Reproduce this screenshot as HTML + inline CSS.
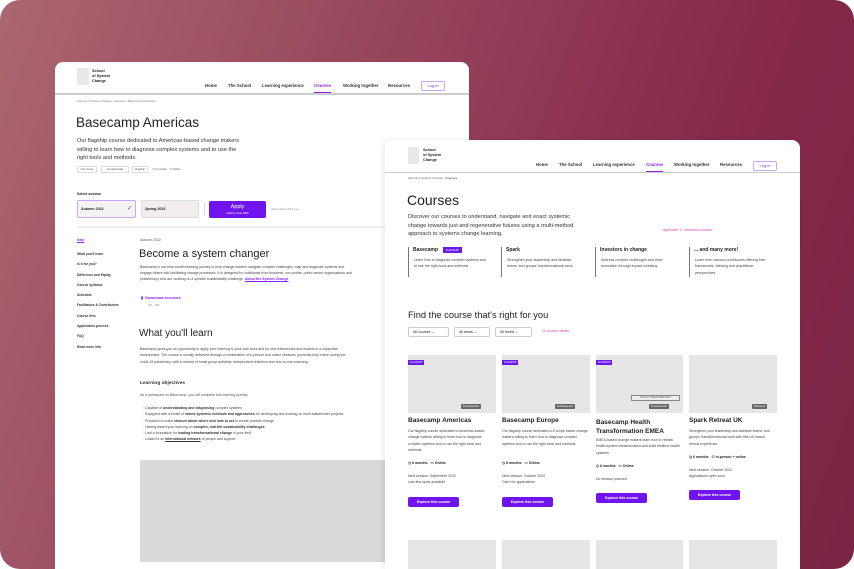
<!DOCTYPE html>
<html><head><meta charset="utf-8">
<style>
*{margin:0;padding:0;box-sizing:border-box}
html,body{width:854px;height:569px;overflow:hidden;background:#fff}
body{font-family:"Liberation Sans",sans-serif;color:#222;position:relative}
.bg{position:absolute;left:0;top:0;width:854px;height:569px;border-radius:20px;background:linear-gradient(110deg,#ab6670 0%,#933f58 45%,#85284a 75%,#7a2545 100%);overflow:hidden}
.win{position:absolute;background:#fff;border-radius:8px 8px 0 0;overflow:hidden}
.a{position:absolute;white-space:nowrap;line-height:1}
.logo{position:absolute;background:#e8e8e8}
.nav{font-size:4.3px;font-weight:bold;color:#333}
.p{color:#8d22f0}
.btn{position:absolute;background:#6f14ef;border-radius:2px;color:#fff;font-size:4px;font-weight:bold;text-align:center}
.gry{position:absolute;background:#e6e6e6}
.tag{position:absolute;background:#6a1aef;color:#fff;font-size:2.5px;padding:1px 2px}
.dtag{position:absolute;background:#666;color:#fff;font-size:2.5px;padding:1px 2px;border-radius:1px}
.t{font-size:4px;color:#444;line-height:6.3px;white-space:normal}
.t b{color:#333}
</style></head><body>
<div class="bg"></div>

<!-- LEFT WINDOW -->
<div class="win" style="left:55px;top:62px;width:414px;height:507px">
 <div class="logo" style="left:22px;top:6px;width:12px;height:17px"></div>
 <div class="a" style="left:37px;top:7px;font-size:3.8px;font-weight:bold;line-height:5px">School<br>of System<br>Change</div>
 <div class="a nav" style="left:150px;top:22px">Home</div>
 <div class="a nav" style="left:173px;top:22px">The School</div>
 <div class="a nav" style="left:207px;top:22px">Learning experience</div>
 <div class="a nav p" style="left:259px;top:22px">Courses</div>
 <div style="position:absolute;left:259px;top:30px;width:17px;height:1px;background:#8d22f0"></div>
 <div class="a nav" style="left:288px;top:22px">Working together</div>
 <div class="a nav" style="left:333px;top:22px">Resources</div>
 <div style="position:absolute;left:366px;top:19px;width:24px;height:10px;border:1px solid #c9a6f7;border-radius:2px;font-size:4px;color:#8d22f0;text-align:center;line-height:8px">Log in</div>
 <div style="position:absolute;left:0;top:31px;width:414px;height:1.5px;background:#ccc"></div>
 <div class="a" style="left:22px;top:38px;font-size:3px;color:#777">School of System Change › Courses › Basecamp Americas</div>
 <div class="a" style="left:21px;top:54px;font-size:13.5px;color:#222">Basecamp Americas</div>
 <div class="a" style="left:22px;top:75px;font-size:5.6px;line-height:8.5px;color:#333">Our flagship course dedicated to Americas-based change makers<br>willing to learn how to diagnose complex systems and to use the<br>right tools and methods.</div>
 <div style="position:absolute;left:22px;top:104px;width:20px;height:7px;border:1px solid #ddd;border-radius:1px;font-size:2.6px;line-height:5px;text-align:center;color:#555">Full course</div>
 <div style="position:absolute;left:46px;top:104px;width:28px;height:7px;border:1px solid #ddd;border-radius:1px;font-size:2.6px;line-height:5px;text-align:center;color:#555">Fundamentals</div>
 <div style="position:absolute;left:77px;top:104px;width:16px;height:7px;border:1px solid #ddd;border-radius:1px;font-size:2.6px;line-height:5px;text-align:center;color:#555">Flagship</div>
 <div class="a" style="left:97px;top:106px;font-size:2.8px;color:#555">◷ 6 months &nbsp; ▭ Online</div>
 <div class="a" style="left:22px;top:131px;font-size:3.5px;font-weight:bold">Select session</div>
 <div style="position:absolute;left:22px;top:138px;width:59px;height:18px;border:1.5px solid #c9a6f7;border-radius:2px;background:#f4f2f2"></div>
 <div class="a" style="left:26px;top:146px;font-size:3.6px;font-weight:bold">Autumn 2022</div>
 <div class="a p" style="left:72px;top:144px;font-size:6px">✓</div>
 <div style="position:absolute;left:86px;top:138px;width:58px;height:18px;border:1px solid #ddd;border-radius:2px;background:#f2eeee"></div>
 <div class="a" style="left:90px;top:146px;font-size:3.6px;font-weight:bold">Spring 2023</div>
 <div style="position:absolute;left:149px;top:140px;width:1px;height:14px;background:#ddd"></div>
 <div class="btn" style="left:154px;top:139px;width:57px;height:17px"><div style="font-size:5.5px;font-weight:normal;margin-top:2.5px">Apply</div><div style="font-size:3px;font-weight:normal;margin-top:1px">before June 30th</div></div>
 <div class="a" style="left:216px;top:147px;font-size:2.5px;color:#888">Unsure how to bring it up</div>
 <div style="position:absolute;left:22px;top:164px;width:392px;height:1.5px;background:#eee"></div>
 <div class="a p" style="left:22px;top:177px;font-size:3.3px;text-decoration:underline;font-weight:bold">Intro</div>
 <div class="a" style="left:22px;top:187px;font-size:3.3px;font-weight:bold;line-height:10.3px;color:#333">What you'll learn<br>Is it for you?<br>Difference and Equity<br>Course syllabus<br>Schedule<br>Facilitators &amp; Contributors<br>Course fees<br>Application process<br>FAQ<br>Read more info</div>
 <div class="a" style="left:85px;top:177px;font-size:3.5px;color:#555">Autumn 2022</div>
 <div class="a" style="left:84px;top:187px;font-size:11px;color:#222">Become a system changer</div>
 <div class="a t" style="left:85px;top:202px;width:215px;font-size:3.5px;line-height:6px">Basecamp is our nine-month learning journey to help change leaders navigate complex challenges, map and diagnose systems and engage others with facilitating change processes. It is designed for individuals from business, non-profits, public sector organisations and philanthropy who are working on a specific sustainability challenge. <span class="p" style="text-decoration:underline;font-weight:bold">About the System Change</span></div>
 <div class="a p" style="left:86px;top:235px;font-size:3.8px;font-weight:bold">▮ &nbsp;Download brochure</div>
 <div class="a" style="left:93px;top:242px;font-size:2.8px;color:#888">pdf · 2Mb</div>
 <div class="a" style="left:84px;top:267px;font-size:10px;color:#222">What you'll learn</div>
 <div class="a t" style="left:85px;top:284px;width:215px;font-size:3.5px;line-height:6.3px">Basecamp gives you an opportunity to apply your learning to your own work and try new frameworks and models in a supportive environment. The course is usually delivered through a combination of in person and online sessions (currently fully online during the covid-19 pandemic), with a mixture of small group activities, independent reflection and one-to-one coaching.</div>
 <div class="a" style="left:85px;top:320px;font-size:4.8px;font-weight:bold;color:#333">Learning objectives</div>
 <div class="a" style="left:85px;top:332px;font-size:3.5px;color:#555">As a participant on Basecamp, you will complete this learning journey:</div>
 <div class="a t" style="left:88px;top:343px;width:210px;font-size:3.5px;line-height:6.3px">· Capable of <b>understanding and diagnosing</b> complex systems<br>· Equipped with a toolkit of <b>varied systemic methods and approaches</b> for developing and working on multi-stakeholder projects<br>· Prepared to make <b>choices about where and how to act</b> to create positive change<br>· Having tested your learning on <b>complex, real-life sustainability challenges</b><br>· Laid a foundation for <b>leading transformational change</b> in your field<br>· Linked to an <b style="text-decoration:underline">international network</b> of people and support</div>
 <div style="position:absolute;left:85px;top:398px;width:329px;height:102px;background:#d9d9d9"></div>
</div>

<!-- RIGHT WINDOW -->
<div class="win" style="left:385px;top:140px;width:415px;height:429px;box-shadow:-2px 0 6px rgba(0,0,0,.08)">
 <div class="logo" style="left:23px;top:7px;width:11px;height:17px"></div>
 <div class="a" style="left:38px;top:8px;font-size:3.8px;font-weight:bold;line-height:5px">School<br>of System<br>Change</div>
 <div class="a nav" style="left:151px;top:23px">Home</div>
 <div class="a nav" style="left:174px;top:23px">The School</div>
 <div class="a nav" style="left:208px;top:23px">Learning experience</div>
 <div class="a nav p" style="left:261px;top:23px">Courses</div>
 <div style="position:absolute;left:261px;top:31px;width:17px;height:1px;background:#8d22f0"></div>
 <div class="a nav" style="left:289px;top:23px">Working together</div>
 <div class="a nav" style="left:335px;top:23px">Resources</div>
 <div style="position:absolute;left:368px;top:21px;width:24px;height:10px;border:1px solid #c9a6f7;border-radius:2px;font-size:4px;color:#8d22f0;text-align:center;line-height:8px">Log in</div>
 <div style="position:absolute;left:0;top:31.5px;width:415px;height:1.5px;background:#ccc"></div>
 <div class="a" style="left:23px;top:37px;font-size:3px;color:#666">School of System Change › <b>Courses</b></div>
 <div class="a" style="left:22px;top:53px;font-size:14px;color:#222">Courses</div>
 <div class="a" style="left:23px;top:73px;font-size:5.6px;line-height:8.5px;color:#333">Discover our courses to understand, navigate and enact systemic<br>change towards just and regenerative futures using a multi-method<br>approach to systems change learning.</div>
 <div class="a" style="left:278px;top:89px;font-size:3.6px;color:#e03ea8">Approach 1: "selected courses"</div>

 <div style="position:absolute;left:23px;top:107px;width:1px;height:30px;background:#777"></div>
 <div class="a" style="left:28px;top:108px;font-size:5px;font-weight:bold">Basecamp</div>
 <div class="tag" style="left:58px;top:107px;font-size:2.6px;padding:1.5px 3px">FLAGSHIP</div>
 <div class="a t" style="left:29px;top:117px;width:75px;font-size:3.6px">Learn how to diagnose complex systems and to use the right tools and methods.</div>
 <div style="position:absolute;left:116px;top:107px;width:1px;height:30px;background:#777"></div>
 <div class="a" style="left:121px;top:108px;font-size:5px;font-weight:bold">Spark</div>
 <div class="a t" style="left:122px;top:117px;width:75px;font-size:3.6px">Strengthen your leadership and facilitate teams' and groups' transformational work.</div>
 <div style="position:absolute;left:210px;top:107px;width:1px;height:30px;background:#777"></div>
 <div class="a" style="left:215px;top:108px;font-size:5px;font-weight:bold">Investors in change</div>
 <div class="a t" style="left:216px;top:117px;width:75px;font-size:3.6px">Address complex challenges and drive innovation through impact investing.</div>
 <div style="position:absolute;left:304px;top:107px;width:1px;height:30px;background:#777"></div>
 <div class="a" style="left:309px;top:108px;font-size:5px;font-weight:bold">... and many more!</div>
 <div class="a t" style="left:310px;top:117px;width:75px;font-size:3.6px">Learn from various contributors offering their frameworks, thinking and practitioner perspectives.</div>

 <div class="a" style="left:23px;top:171px;font-size:9.3px;color:#222">Find the course that's right for you</div>
 <div style="position:absolute;left:23px;top:187px;width:41px;height:10px;border:1px solid #ccc;border-radius:2px;font-size:3.6px;line-height:8px;padding-left:4px">All courses ⌄</div>
 <div style="position:absolute;left:69px;top:187px;width:36px;height:10px;border:1px solid #ccc;border-radius:2px;font-size:3.6px;line-height:8px;padding-left:4px">All areas ⌄</div>
 <div style="position:absolute;left:110px;top:187px;width:37px;height:10px;border:1px solid #ccc;border-radius:2px;font-size:3.6px;line-height:8px;padding-left:4px">All levels ⌄</div>
 <div class="a" style="left:157px;top:190px;font-size:3.6px;color:#e03ea8">11 course results</div>

 <div class="gry" style="left:23px;top:215px;width:88px;height:58px"></div>
 <div class="tag" style="left:23px;top:220px">FLAGSHIP</div><div class="dtag" style="left:76px;top:264px">Fundamentals</div>
 <div class="gry" style="left:117px;top:215px;width:88px;height:58px"></div>
 <div class="tag" style="left:117px;top:220px">FLAGSHIP</div><div class="dtag" style="left:170px;top:264px">Fundamentals</div>
 <div class="gry" style="left:211px;top:215px;width:87px;height:58px"></div>
 <div class="tag" style="left:211px;top:220px">FLAGSHIP</div>
 <div style="position:absolute;left:246px;top:255px;width:49px;height:6px;border:.7px solid #888;background:#eee;font-size:2.3px;line-height:4.6px;text-align:center;color:#555">HEALTH TRANSFORMATION</div>
 <div class="dtag" style="left:264px;top:264px">Fundamentals</div>
 <div class="gry" style="left:304px;top:215px;width:88px;height:58px"></div>
 <div class="dtag" style="left:367px;top:264px">Advanced</div>

 <div class="a" style="left:23px;top:278px;font-size:6.5px;font-weight:bold">Basecamp Americas</div>
 <div class="a t" style="left:23px;top:288px;width:87px;font-size:3.5px">Our flagship course dedicated to Americas-based change makers willing to learn how to diagnose complex systems and to use the right tools and methods.</div>
 <div class="a" style="left:23px;top:322px;font-size:3.5px;font-weight:bold">◷ 6 months &nbsp; ▭ Online</div>
 <div class="a t" style="left:23px;top:333px;width:87px;font-size:3.5px">Next session: September 2022<br>Last few spots available</div>
 <div class="btn" style="left:23px;top:357px;width:51px;height:10px;line-height:10px;font-size:3.6px">Explore this course</div>

 <div class="a" style="left:117px;top:278px;font-size:6.5px;font-weight:bold">Basecamp Europe</div>
 <div class="a t" style="left:117px;top:288px;width:87px;font-size:3.5px">Our flagship course dedicated to Europe-based change makers willing to learn how to diagnose complex systems and to use the right tools and methods.</div>
 <div class="a" style="left:117px;top:322px;font-size:3.5px;font-weight:bold">◷ 6 months &nbsp; ▭ Online</div>
 <div class="a t" style="left:117px;top:333px;width:87px;font-size:3.5px">Next session: October 2022<br>Open for applications</div>
 <div class="btn" style="left:117px;top:357px;width:51px;height:10px;line-height:10px;font-size:3.6px">Explore this course</div>

 <div class="a" style="left:211px;top:278px;font-size:6.5px;font-weight:bold;line-height:9.3px">Basecamp Health<br>Transformation EMEA</div>
 <div class="a t" style="left:211px;top:297px;width:87px;font-size:3.5px">EMEA-based change makers learn how to rethink health system transformation and build resilient health systems.</div>
 <div class="a" style="left:211px;top:325px;font-size:3.5px;font-weight:bold">◷ 6 months &nbsp; ▭ Online</div>
 <div class="a t" style="left:211px;top:336px;width:87px;font-size:3.5px">No session planned</div>
 <div class="btn" style="left:211px;top:353px;width:51px;height:10px;line-height:10px;font-size:3.6px">Explore this course</div>

 <div class="a" style="left:304px;top:278px;font-size:6.5px;font-weight:bold">Spark Retreat UK</div>
 <div class="a t" style="left:304px;top:288px;width:87px;font-size:3.5px">Strengthen your leadership and facilitate teams' and groups' transformational work with this UK-based retreat experience.</div>
 <div class="a" style="left:304px;top:316px;font-size:3.5px;font-weight:bold">◷ 6 months &nbsp; ⚇ In-person + online</div>
 <div class="a t" style="left:304px;top:327px;width:87px;font-size:3.5px">Next session: October 2022<br>Applications open soon</div>
 <div class="btn" style="left:304px;top:350px;width:51px;height:10px;line-height:10px;font-size:3.6px">Explore this course</div>

 <div class="gry" style="left:23px;top:400px;width:88px;height:40px"></div>
 <div class="gry" style="left:117px;top:400px;width:88px;height:40px"></div>
 <div class="gry" style="left:211px;top:400px;width:87px;height:40px"></div>
 <div class="gry" style="left:304px;top:400px;width:88px;height:40px"></div>
</div>
</body></html>
